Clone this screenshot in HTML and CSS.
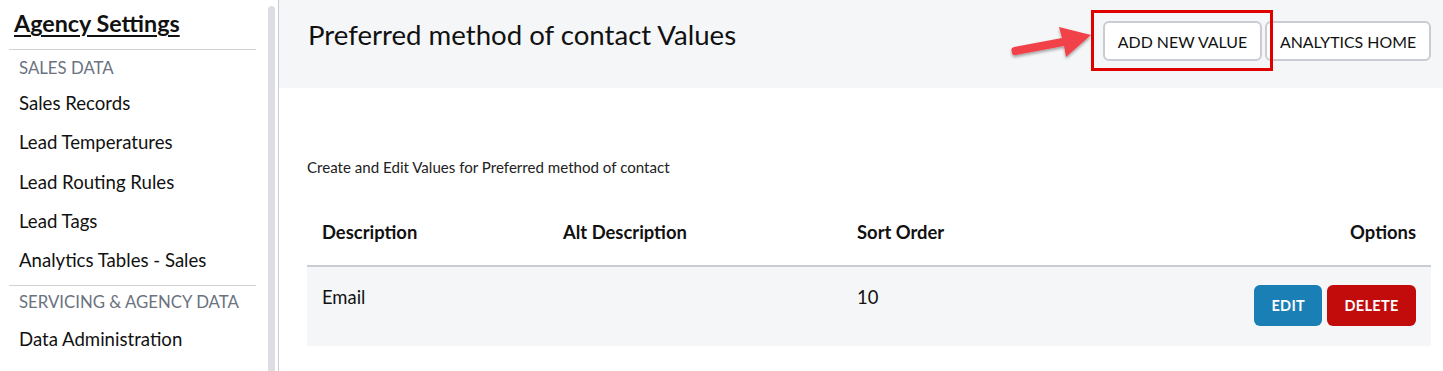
FILE: index.html
```html
<!DOCTYPE html>
<html lang="en">
<head>
    <meta charset="UTF-8">
    <meta name="viewport" content="width=device-width, initial-scale=1.0">
    <title>Preferred method of contact Values</title>
    <link rel="stylesheet" href="styles.css">
</head>
<body>
    <div class="layout">
        <aside class="sidebar">
            <h2 class="sidebar-title">Agency Settings</h2>
            <div class="nav-section">Sales Data</div>
            <a class="nav-link" href="#">Sales Records</a>
            <a class="nav-link" href="#">Lead Temperatures</a>
            <a class="nav-link" href="#">Lead Routing Rules</a>
            <a class="nav-link" href="#">Lead Tags</a>
            <a class="nav-link" href="#">Analytics Tables - Sales</a>
            <div class="nav-section">Servicing &amp; Agency Data</div>
            <a class="nav-link" href="#">Data Administration</a>
            <a class="nav-link" href="#">Agency Holidays</a>
        </aside>
        <div class="scroll-track"><div class="scroll-thumb"></div></div>

        <main class="main">
            <header class="page-header">
                <h1 class="page-title">Preferred method of contact Values</h1>
                <div class="header-actions">
                    <button class="btn-outline">ADD NEW VALUE</button>
                    <button class="btn-outline">ANALYTICS HOME</button>
                </div>

                <!-- annotation drawn over the screenshot -->
                <div class="highlight-box"></div>
                <svg class="pointer-arrow" width="100" height="50" viewBox="0 0 100 50">
                    <defs>
                        <filter id="arrowShadow" x="-20%" y="-40%" width="140%" height="180%">
                            <feDropShadow dx="0" dy="2" stdDeviation="1.6" flood-color="#000" flood-opacity="0.35"/>
                        </filter>
                    </defs>
                    <path d="M8 38 Q6 34 10 33 L58 24 L55 13 L87 21 L62 43 L60 32 L12 41 Q8 42 8 38 Z" fill="#f2424a" filter="url(#arrowShadow)"/>
                </svg>
            </header>

            <section class="content">
                <p class="intro">Create and Edit Values for Preferred method of contact</p>

                <table class="values-table">
                    <thead>
                        <tr>
                            <th class="col-desc">Description</th>
                            <th class="col-alt">Alt Description</th>
                            <th class="col-sort">Sort Order</th>
                            <th class="col-options">Options</th>
                        </tr>
                    </thead>
                    <tbody>
                        <tr>
                            <td>Email</td>
                            <td></td>
                            <td>10</td>
                            <td class="col-options">
                                <button class="btn-edit">EDIT</button>
                                <button class="btn-delete">DELETE</button>
                            </td>
                        </tr>
                    </tbody>
                </table>
            </section>
        </main>
    </div>
</body>
</html>
```

FILE: styles.css
```css
* {
    margin: 0;
    padding: 0;
    box-sizing: border-box;
}

body {
    font-family: Lato, 'Noto Sans', 'Liberation Sans', sans-serif;
    background: #fff;
    color: #111;
    height: 371px;
    overflow: hidden;
}

.layout {
    display: flex;
    height: 371px;
}

/* sidebar */

.sidebar {
    width: 267px;
    flex-shrink: 0;
    padding: 8px 11px 0 9px;
    overflow: hidden;
}

.sidebar-title {
    font-size: 23.3px;
    font-weight: 700;
    text-decoration: underline;
    text-underline-offset: 3px;
    text-decoration-thickness: 2px;
    padding: 0 0 10px 5px;
    line-height: 31px;
    border-bottom: 1px solid #cfd2d6;
}

.nav-section {
    font-size: 16.8px;
    color: #6b7280;
    text-transform: uppercase;
    padding: 6px 10px 0;
    line-height: 24px;
}

.nav-link {
    display: block;
    font-size: 18.6px;
    color: #111;
    text-decoration: none;
    padding: 0 10px;
    line-height: 39.3px;
}

.nav-section + .nav-link {
    margin-top: 4px;
}

.nav-link + .nav-section {
    border-top: 1px solid #cfd2d6;
    margin-top: 5px;
    padding-top: 4px;
}

.nav-link + .nav-section + .nav-link {
    margin-top: 6px;
}

.scroll-track {
    width: 12px;
    flex-shrink: 0;
    padding: 6px 3px 0 1px;
    border-right: 1px solid #c9ccd2;
}

.scroll-thumb {
    height: 100%;
    background: #dcdee3;
    border-radius: 4px 4px 0 0;
}

/* main */

.main {
    flex: 1;
    min-width: 0;
}

.page-header {
    position: relative;
    background: #f5f6f8;
    height: 88px;
    display: flex;
    justify-content: space-between;
    align-items: flex-start;
    padding: 19px 12px 0 29px;
}

.page-title {
    font-size: 27.6px;
    font-weight: 400;
    line-height: 32px;
}

.header-actions {
    display: flex;
    gap: 3px;
    padding-top: 2px;
}

.btn-outline {
    font-family: inherit;
    font-size: 15.9px;
    color: #111;
    background: #fff;
    border: 2px solid #c9ccd3;
    border-radius: 6px;
    height: 40px;
    padding: 0;
    white-space: nowrap;
    cursor: pointer;
}

.btn-outline:first-child {
    width: 159px;
}

.btn-outline:last-child {
    width: 166px;
}

.highlight-box {
    position: absolute;
    left: 812px;
    top: 10px;
    width: 182px;
    height: 61px;
    border: 3px solid #e00000;
}

.pointer-arrow {
    position: absolute;
    left: 725px;
    top: 14px;
}

.content {
    padding: 70px 12px 0 28px;
}

.intro {
    font-size: 15.1px;
    line-height: 18px;
    color: #222;
    margin-bottom: 40px;
}

.values-table {
    width: 100%;
    border-collapse: collapse;
}

.values-table th {
    font-size: 18.4px;
    font-weight: 700;
    text-align: left;
    padding: 5px 15px 0;
    height: 50px;
    vertical-align: top;
    border-bottom: 2px solid #c9ccd3;
}

.values-table td {
    font-size: 18.4px;
    background: #f5f6f8;
    padding: 19px 15px 0;
    height: 80px;
    vertical-align: top;
}

.col-desc {
    width: 241px;
}

.col-alt {
    width: 294px;
}

.values-table .col-options {
    text-align: right;
}

.values-table td.col-options {
    padding-top: 18px;
}

.btn-edit,
.btn-delete {
    font-family: inherit;
    font-size: 14.5px;
    font-weight: 700;
    color: #fff;
    border: none;
    border-radius: 6px;
    height: 41px;
    cursor: pointer;
    letter-spacing: 0.3px;
}

.btn-edit {
    background: #1a7fb5;
    width: 68px;
}

.btn-delete {
    background: #c20c0c;
    width: 89px;
}
```
